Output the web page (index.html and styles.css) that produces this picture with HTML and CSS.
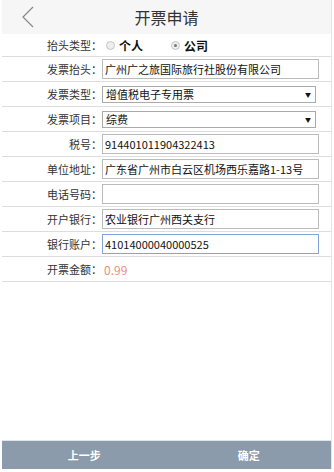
FILE: index.html
```html
<!DOCTYPE html>
<html lang="zh-CN">
<head>
    <meta charset="UTF-8">
    <meta name="viewport" content="width=device-width, initial-scale=1.0">
    <title>开票申请</title>
    <link rel="stylesheet" href="styles.css">
</head>
<body>
    <div class="app">
        <div class="header">
            <span class="back">
                <svg width="12" height="22" viewBox="0 0 12 22"><path d="M11 1 L1 11 L11 21" fill="none" stroke="#888" stroke-width="1.2"/></svg>
            </span>
            <h1>开票申请</h1>
        </div>

        <div class="row row-first">
            <label>抬头类型：</label>
            <span class="radio"></span><span class="radio-text">个人</span>
            <span class="radio checked"></span><span class="radio-text">公司</span>
        </div>
        <div class="row">
            <label>发票抬头：</label>
            <input type="text" value="广州广之旅国际旅行社股份有限公司">
        </div>
        <div class="row">
            <label>发票类型：</label>
            <div class="select">增值税电子专用票</div>
        </div>
        <div class="row">
            <label>发票项目：</label>
            <div class="select">综费</div>
        </div>
        <div class="row">
            <label>税号：</label>
            <input type="text" value="914401011904322413">
        </div>
        <div class="row">
            <label>单位地址：</label>
            <input type="text" value="广东省广州市白云区机场西乐嘉路1-13号">
        </div>
        <div class="row">
            <label>电话号码：</label>
            <input type="text" value="">
        </div>
        <div class="row">
            <label>开户银行：</label>
            <input type="text" value="农业银行广州西关支行">
        </div>
        <div class="row">
            <label>银行账户：</label>
            <input type="text" class="focused" value="41014000040000525">
        </div>
        <div class="row">
            <label>开票金额：</label>
            <span class="amount">0.99</span>
        </div>

        <div class="footer">
            <button>上一步</button>
            <button>确定</button>
        </div>
    </div>
</body>
</html>
```

FILE: styles.css
```css
body {
    margin: 0;
    font-family: "Noto Sans CJK SC", "Noto Sans", sans-serif;
    font-size: 11px;
    color: #333;
    background: #fff;
}
.app {
    width: 329px;
    height: 469px;
    margin-left: 2px;
    border-right: 1px solid #e4e4e4;
    display: flex;
    flex-direction: column;
}
.header {
    height: 34px;
    background: #f6f6f6;
    display: flex;
    align-items: center;
    justify-content: center;
    position: relative;
}
.back {
    position: absolute;
    left: 20px;
    top: 6px;
}
.header h1 {
    margin: 0;
    font-size: 16px;
    font-weight: normal;
    color: #333;
}
.row {
    height: 24px;
    border-bottom: 1px solid #ddd;
    display: flex;
    align-items: center;
}
.row-first {
    height: 22px;
}
.row label {
    width: 100px;
    text-align: right;
    color: #333;
}
.row input {
    width: 217px;
    height: 20px;
    box-sizing: border-box;
    border: 1px solid #bbb;
    padding: 0 2px;
    font-family: inherit;
    font-size: 11px;
    color: #111;
    outline: none;
}
.row input.focused {
    border-color: #7ea6dc;
}
.select {
    width: 214px;
    height: 17px;
    box-sizing: border-box;
    border: 1px solid #aaa;
    padding: 0 3px;
    line-height: 15px;
    color: #111;
    position: relative;
}
.select::after {
    content: "▼";
    position: absolute;
    right: 4px;
    top: 0;
    font-size: 6px;
    color: #111;
}
.radio {
    width: 7px;
    height: 7px;
    border-radius: 50%;
    border: 1px solid #c4c4c4;
    background: #eee;
    margin: 0 4px 0 4px;
    position: relative;
}
.radio.checked::after {
    content: "";
    position: absolute;
    left: 2px;
    top: 2px;
    width: 3px;
    height: 3px;
    border-radius: 50%;
    background: #777;
}
.radio-text {
    font-weight: bold;
    color: #111;
    font-size: 12px;
    margin-right: 24px;
}
.amount {
    color: #f08c7c;
    font-size: 12px;
    margin-left: 2px;
}
.footer {
    margin-top: auto;
    height: 28px;
    border-top: 1px solid #dfe4ea;
    background: #8b9bab;
    display: flex;
}
.footer button {
    flex: 1;
    border: none;
    background: transparent;
    color: #fff;
    font-family: inherit;
    font-size: 11px;
    font-weight: bold;
}
```
